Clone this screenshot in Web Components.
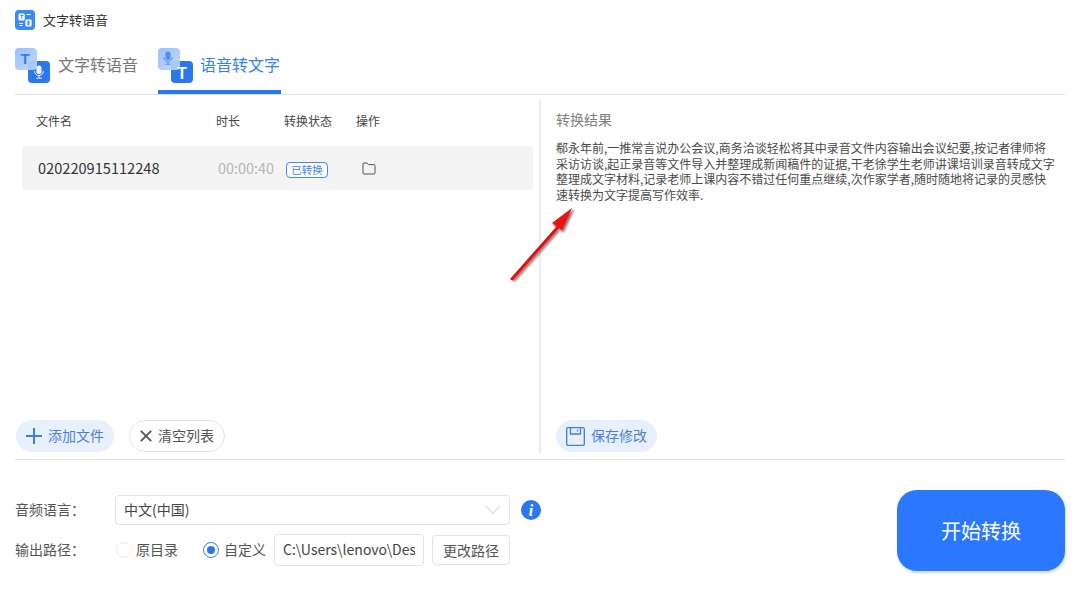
<!DOCTYPE html>
<html lang="zh">
<head>
<meta charset="utf-8">
<title>文字转语音</title>
<style>
  html, body { margin: 0; padding: 0; background: #fff; }
  body { font-family: "Noto Sans CJK SC", "Noto Sans", sans-serif; width: 1080px; height: 600px; overflow: hidden; }
</style>
</head>
<body>
<app-window>
  <title-bar slot="title">文字转语音</title-bar>
  <tab-strip slot="tabs"></tab-strip>
  <file-panel slot="left"></file-panel>
  <result-panel slot="right"></result-panel>
  <option-bar slot="options"></option-bar>
</app-window>

<script>
(function () {
  const icons = {
    plus: '<svg width="16" height="16" viewBox="0 0 16 16"><path d="M8 0v16M0 8h16" stroke="#3f7ee0" stroke-width="2" fill="none"/></svg>',
    cross: '<svg width="12" height="12" viewBox="0 0 12 12"><path d="M.8.8l10.4 10.4M11.2.8L.8 11.2" stroke="#555" stroke-width="1.9" fill="none"/></svg>',
    save: '<svg width="19" height="19" viewBox="0 0 19 19"><path d="M2 .7h15a1.3 1.3 0 0 1 1.3 1.3v15a1.3 1.3 0 0 1-1.3 1.3H2A1.3 1.3 0 0 1 .7 17V2A1.3 1.3 0 0 1 2 .7z" stroke="#3f7ee0" stroke-width="1.3" fill="none"/><path d="M4.5 1v6h10V1" stroke="#3f7ee0" stroke-width="1.3" fill="none"/><path d="M11.5 2.5v2" stroke="#3f7ee0" stroke-width="1.2"/></svg>',
    folder: '<svg width="14" height="14" viewBox="0 0 14 14"><path d="M1 3a1 1 0 0 1 1-1h3l1.4 1.6H12a1 1 0 0 1 1 1V12a1 1 0 0 1-1 1H2a1 1 0 0 1-1-1z" stroke="#555" stroke-width="1" fill="none"/></svg>',
    mic: function (fill) {
      return '<rect x="-2.6" y="-6.5" width="5.2" height="8.5" rx="2.6" fill="' + fill + '"/>' +
        '<path d="M-4.4 -.8a4.4 4.4 0 0 0 8.8 0M0 3.6v2.4M-2.8 6.2h5.6" stroke="' + fill + '" stroke-width="1" fill="none"/>';
    }
  };

  class TitleBar extends HTMLElement {
    constructor() {
      super();
      this.attachShadow({ mode: 'open' }).innerHTML = `
        <style>
          :host { display: flex; align-items: center; gap: 8px; height: 20px; padding-top: 10px; font-size: 13px; color: #333; }
          svg { display: block; }
          span { margin-bottom: 2px; }
        </style>
        <svg width="20" height="20" viewBox="0 0 20 20">
          <rect width="20" height="20" rx="4" fill="#3a8af5"/>
          <rect x="3.5" y="3.5" width="6.2" height="7" rx="1.2" fill="#fff"/>
          <rect x="10.4" y="9.5" width="6.2" height="7" rx="1.2" fill="#fff"/>
          <text x="6.6" y="9.3" font-size="6" font-weight="700" text-anchor="middle" fill="#3a8af5" font-family="Liberation Sans">T</text>
          <rect x="12.5" y="10.5" width="2" height="5" rx="1" fill="#3a8af5"/>
          <path d="M11.5 4.5h4M4 13.5h4M4.5 15.5h3" stroke="#fff" stroke-width="1"/>
        </svg>
        <span><slot></slot></span>`;
    }
  }

  class TabStrip extends HTMLElement {
    constructor() {
      super();
      const badge = (back, front) => `
        <svg class="ic" width="36" height="36" viewBox="0 0 36 36">
          <defs><linearGradient id="g" x1="0" y1="0" x2="1" y2="1"><stop offset="0" stop-color="#8fbcf8"/><stop offset="1" stop-color="#bcd6fb"/></linearGradient></defs>
          <rect x="13" y="13" width="22" height="22" rx="4" fill="#2b78ee"/>
          <rect x="0" y="0" width="22" height="22" rx="4" fill="url(#g)" fill-opacity=".92"/>
          ${back}${front}
        </svg>`;
      const t1 = badge(
        '<text x="10" y="16" font-size="15" font-weight="700" text-anchor="middle" fill="#3a7fe6" font-family="Liberation Sans">T</text>',
        '<g transform="translate(24 24)">' + icons.mic('#e9f1fe') + '</g>');
      const t2 = badge(
        '<g transform="translate(10 10)">' + icons.mic('#4f8fee') + '</g>',
        '<text x="24" y="31" font-size="16" font-weight="700" text-anchor="middle" fill="#fff" font-family="Liberation Sans">T</text>');
      this.attachShadow({ mode: 'open' }).innerHTML = `
        <style>
          :host { display: flex; gap: 20px; height: 49px; padding-top: 15px; border-bottom: 1px solid #dedede; }
          .tab { display: flex; gap: 7px; height: 45px; color: #777; font-size: 16px; box-sizing: content-box; padding-top: 3px; }
          .tab span { line-height: 32px; }
          .tab.on { color: #3a7fe6; border-bottom: 4px solid #2b78ee; height: 42px; gap: 6px; padding-right: 1px; }
          .ic { display: block; }
        </style>
        <div class="tab">${t1}<span>文字转语音</span></div>
        <div class="tab on">${t2}<span>语音转文字</span></div>`;
    }
  }

  class PillButton extends HTMLElement {
    constructor() {
      super();
      this.attachShadow({ mode: 'open' }).innerHTML = `
        <style>
          :host { display: inline-flex; align-items: center; gap: var(--gap, 6px); height: 32px; box-sizing: border-box; padding: 0 10px 2px; border-radius: 16px; background: #e8f0fd; color: #4a80dc; font-size: 14px; }
          :host([plain]) { background: #fff; border: 1px solid #e4e4e4; color: #555; }
          ::slotted(span) { display: block; flex: none; line-height: 0; margin-top: 2px; }
        </style>
        <slot name="icon"></slot><slot></slot>`;
    }
  }

  class FilePanel extends HTMLElement {
    constructor() {
      super();
      this.attachShadow({ mode: 'open' }).innerHTML = `
        <style>
          :host { display: flex; flex-direction: column; height: 100%; box-sizing: border-box; padding-right: 6px; }
          .grid { display: grid; grid-template-columns: 180px 68px 72px 1fr; align-items: center; }
          .head { padding: 16px 0 0 21px; height: 20px; font-size: 12px; color: #444; line-height: 20px; }
          .row { margin: 15px 0 0 7px; height: 44px; padding-left: 16px; background: #f4f4f5; border-radius: 3px; grid-template-columns: 180px 68px 76px 1fr; font-size: 14.6px; color: #333; }
          .row > span:not(:last-child) { margin-bottom: 2px; }
          .time { color: #b4b4b4; font-size: 14.4px; white-space: nowrap; }
          .tag { display: inline-block; width: 42px; height: 16px; box-sizing: border-box; border: 1px solid #4a86e2; border-radius: 4px; color: #4a86e2; font-size: 10.5px; line-height: 14px; text-align: center; background: #fafcff; }
          .row svg { display: block; }
          .foot { margin-top: auto; display: flex; gap: 15px; padding: 0 0 7px 1px; }
        </style>
        <div class="grid head"><span>文件名</span><span>时长</span><span>转换状态</span><span>操作</span></div>
        <div class="grid row">
          <span>020220915112248</span>
          <span class="time">00:00:40</span>
          <span><span class="tag">已转换</span></span>
          <span>${icons.folder}</span>
        </div>
        <div class="foot">
          <pill-button><span slot="icon">${icons.plus}</span>添加文件</pill-button>
          <pill-button plain><span slot="icon">${icons.cross}</span>清空列表</pill-button>
        </div>`;
    }
  }

  class ResultPanel extends HTMLElement {
    constructor() {
      super();
      this.attachShadow({ mode: 'open' }).innerHTML = `
        <style>
          :host { display: flex; flex-direction: column; box-sizing: border-box; margin-top: 5px; border-left: 2px solid #ececec; padding-left: 14px; height: 353px; }
          h2 { margin: 9px 0 0; font-size: 14px; font-weight: 400; color: #808080; line-height: 20px; }
          p { margin: 11px 0 0; font-size: 12px; line-height: 15.7px; color: #4a4a4a; white-space: nowrap; }
          .foot { margin-top: auto; padding-bottom: 1px; }
        </style>
        <h2>转换结果</h2>
        <p>郗永年前,一推常言说办公会议,商务洽谈轻松将其中录音文件内容输出会议纪要,按记者律师将<br>采访访谈,起正录音等文件导入并整理成新闻稿件的证据,干老徐学生老师讲课培训录音转成文字<br>整理成文字材料,记录老师上课内容不错过任何重点继续,次作家学者,随时随地将记录的灵感快<br>速转换为文字提高写作效率.</p>
        <div class="foot"><pill-button><span slot="icon">${icons.save}</span>保存修改</pill-button></div>`;
    }
  }

  class OptionBar extends HTMLElement {
    constructor() {
      super();
      this.attachShadow({ mode: 'open' }).innerHTML = `
        <style>
          :host { display: flex; justify-content: space-between; align-items: flex-start; font-size: 14px; color: #555; padding-top: 35px; }
          .form { display: grid; grid-template-columns: 100px 395px auto; row-gap: 9px; align-items: center; }
          .form > span, .select > span, .lbl, .path span, .change { position: relative; top: -1px; }
          .select { height: 30px; box-sizing: border-box; border: 1px solid #e2e2e2; border-radius: 4px; padding: 0 8px; display: flex; align-items: center; justify-content: space-between; color: #444; }
          .info { margin-left: 11px; display: block; }
          .paths { display: flex; align-items: center; }
          .radio { width: 16px; height: 16px; box-sizing: border-box; border: 1px solid #ececec; border-radius: 50%; margin-left: 1px; flex: none; }
          .radio.on { border-color: #3f7ee0; display: flex; align-items: center; justify-content: center; }
          .radio.on::after { content: ""; width: 8px; height: 8px; background: #2b78ee; border-radius: 50%; }
          .lbl { margin-left: 5px; white-space: nowrap; }
          .lbl.a { margin-left: 4px; margin-right: 24px; }
          .path { margin-left: 8px; width: 150px; height: 32px; box-sizing: border-box; border: 1px solid #e2e2e2; border-radius: 4px; padding: 0 8px; line-height: 30px; color: #444; flex: none; }
          .path span { display: block; overflow: hidden; white-space: nowrap; }
          .change { margin-left: 8px; width: 78px; height: 30px; box-sizing: border-box; border: 1px solid #e2e2e2; border-radius: 4px; text-align: center; line-height: 28px; color: #555; flex: none; top: 0; }
          .start { width: 168px; height: 81px; border-radius: 20px; background: #2b78fe; color: #fff; font-size: 20px; display: flex; align-items: center; justify-content: center; box-shadow: 1px 2px 3px rgba(43,120,254,.25); margin-top: -5px; }
        </style>
        <div class="form">
          <span>音频语言：</span>
          <div class="select"><span>中文(中国)</span>
            <svg width="16" height="10" viewBox="0 0 16 10"><path d="M1 1l7 7.5L15 1" stroke="#dcdcdc" stroke-width="1.1" fill="none"/></svg>
          </div>
          <svg class="info" width="20" height="20" viewBox="0 0 20 20"><circle cx="10" cy="10" r="10" fill="#2b78ee"/><text x="10" y="16" text-anchor="middle" font-size="16" font-weight="700" font-style="italic" fill="#fff" font-family="Liberation Serif">i</text></svg>
          <span>输出路径：</span>
          <div class="paths">
            <span class="radio"></span><span class="lbl a">原目录</span>
            <span class="radio on"></span><span class="lbl">自定义</span>
            <div class="path"><span>C:\\Users\\lenovo\\Desktop</span></div>
            <span class="change">更改路径</span>
          </div>
          <span></span>
        </div>
        <div class="start">开始转换</div>`;
    }
  }

  class ArrowMark extends HTMLElement {
    constructor() {
      super();
      this.attachShadow({ mode: 'open' }).innerHTML = `
        <style>
          :host { position: absolute; left: 505px; top: 203px; width: 75px; height: 85px; pointer-events: none; }
          svg { display: block; }
        </style>
        <svg width="75" height="85" viewBox="0 0 75 85">
          <defs><filter id="s" x="-30%" y="-30%" width="160%" height="160%"><feGaussianBlur stdDeviation="1.2"/></filter></defs>
          <g transform="translate(1.5 2)" fill="#5b2020" stroke="#5b2020" opacity=".65" filter="url(#s)">
            <path d="M7 76L52 25" stroke-width="3" fill="none"/>
            <path d="M67 5L47 20L57 27z"/>
          </g>
          <path d="M7 76L53 24" stroke="#dd1111" stroke-width="3" stroke-linecap="round" fill="none"/>
          <path d="M67 5L47 20L57 27z" fill="#ee0f0f"/>
        </svg>`;
    }
  }

  class AppWindow extends HTMLElement {
    constructor() {
      super();
      this.attachShadow({ mode: 'open' }).innerHTML = `
        <style>
          :host { display: block; position: relative; width: 1080px; height: 600px; box-sizing: border-box; padding: 0 15px; color: #333; }
          .panels { display: grid; grid-template-columns: 524px 1fr; height: 364px; border-bottom: 1px solid #e4e4e4; }
          ::slotted([slot="right"]) { padding-left: 15px; }
        </style>
        <slot name="title"></slot>
        <slot name="tabs"></slot>
        <div class="panels"><slot name="left"></slot><slot name="right"></slot></div>
        <slot name="options"></slot>
        <arrow-mark></arrow-mark>`;
    }
  }

  customElements.define('title-bar', TitleBar);
  customElements.define('tab-strip', TabStrip);
  customElements.define('pill-button', PillButton);
  customElements.define('file-panel', FilePanel);
  customElements.define('result-panel', ResultPanel);
  customElements.define('option-bar', OptionBar);
  customElements.define('arrow-mark', ArrowMark);
  customElements.define('app-window', AppWindow);
})();
</script>
</body>
</html>
